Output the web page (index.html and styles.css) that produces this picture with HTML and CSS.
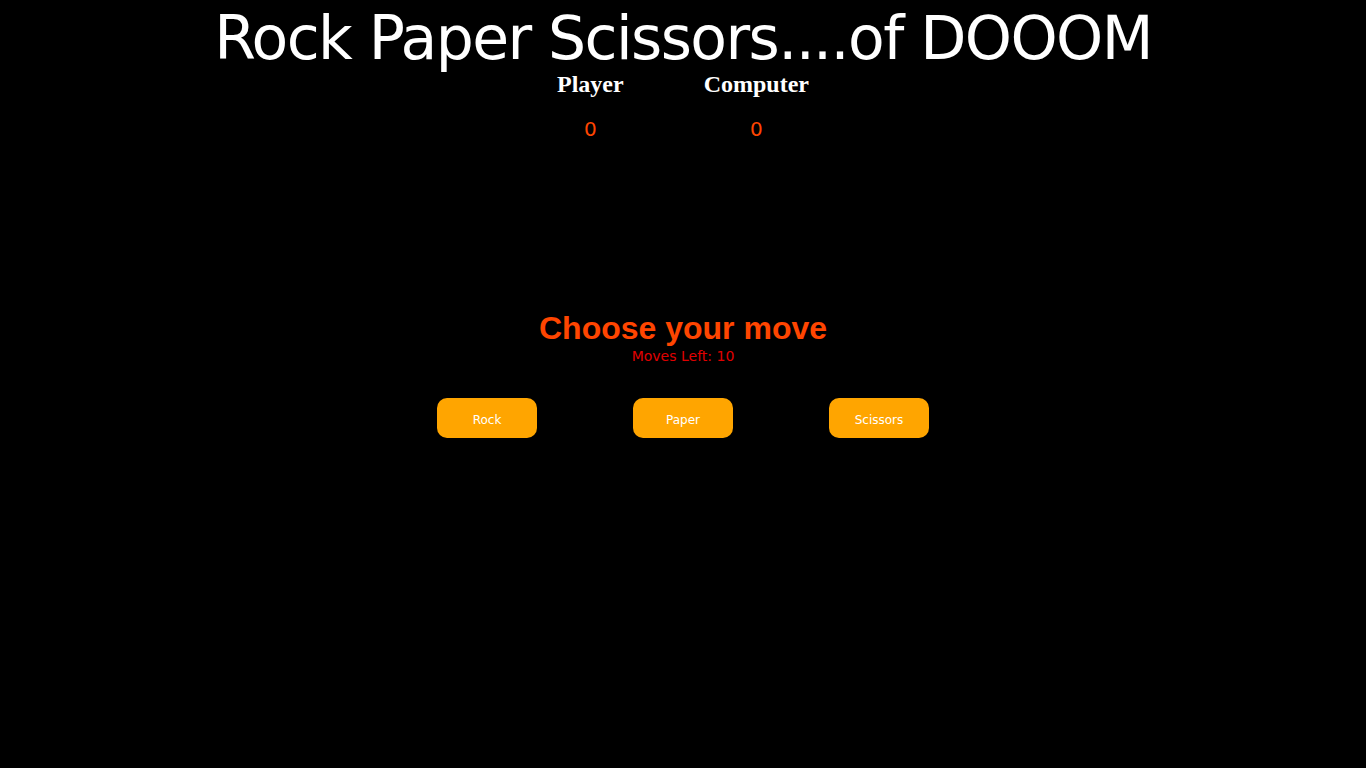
FILE: index.html
```html
<!DOCTYPE html>
<html>
<head>
<meta charset="utf-8">
<link rel="stylesheet" href="styles.css">
</head>
<body>
<h1 class="title">Rock Paper Scissors....of DOOOM</h1>
<div class="scoreboard">
  <div class="score">
    <h2 class="score-label">Player</h2>
    <div class="score-value">0</div>
  </div>
  <div class="score">
    <h2 class="score-label">Computer</h2>
    <div class="score-value">0</div>
  </div>
</div>
<div class="prompt">
  <h2 class="choose">Choose your move</h2>
  <div class="moves-left">Moves Left: 10</div>
</div>
<div class="buttons">
  <button class="move-btn">Rock</button>
  <button class="move-btn">Paper</button>
  <button class="move-btn">Scissors</button>
</div>
</body>
</html>
```
FILE: styles.css
```css
html, body {
  background: #000;
}
body {
  margin: 0;
  font-family: "DejaVu Sans", sans-serif;
  color: #fff;
}
.title {
  margin: 0;
  padding-top: 4px;
  text-align: center;
  font-family: "DejaVu Sans", sans-serif;
  font-weight: normal;
  font-size: 60px;
  line-height: 68px;
  letter-spacing: -1.6px;
  color: #fff;
}
.scoreboard {
  display: flex;
  justify-content: center;
  gap: 80px;
}
.score {
  display: flex;
  flex-direction: column;
  align-items: center;
}
.score-label {
  margin: 0;
  font-family: "Liberation Serif", serif;
  font-weight: bold;
  font-size: 24px;
  line-height: 25px;
}
.score-value {
  margin-top: 20px;
  font-family: "DejaVu Sans", sans-serif;
  font-size: 20px;
  line-height: 24px;
  color: #ff4500;
}
.prompt {
  margin-top: 169px;
  text-align: center;
}
.choose {
  margin: 0;
  font-family: "Liberation Sans", sans-serif;
  font-weight: bold;
  font-size: 32px;
  line-height: 36px;
  color: #ff4500;
}
.moves-left {
  margin-top: 0;
  font-family: "DejaVu Sans", sans-serif;
  font-size: 14px;
  line-height: 20px;
  color: #e00000;
}
.buttons {
  display: flex;
  justify-content: center;
  gap: 96px;
  margin-top: 32px;
}
.move-btn {
  width: 100px;
  height: 40px;
  border: none;
  border-radius: 10px;
  background: #ffa500;
  color: #fff;
  font-family: "DejaVu Sans", sans-serif;
  font-size: 12px;
  padding: 3px 0 0 0;
}
```
